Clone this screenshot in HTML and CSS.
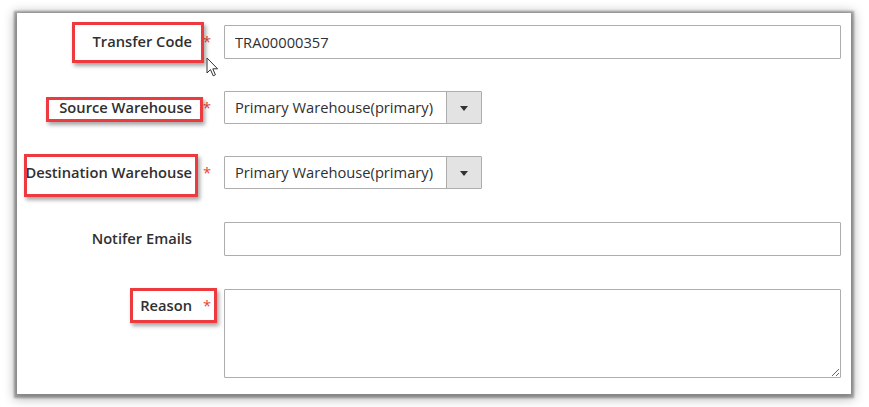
FILE: index.html
```html
<!DOCTYPE html>
<html lang="en">
<head>
<meta charset="utf-8">
<title>Transfer</title>
<link rel="stylesheet" href="styles.css">
</head>
<body>
<div class="page">
  <div class="panel">
    <div class="field">
      <label class="label">Transfer Code<span class="req">*</span></label>
      <div class="control"><input class="input" type="text" value="TRA00000357"></div>
    </div>
    <div class="field">
      <label class="label">Source Warehouse<span class="req">*</span></label>
      <div class="control">
        <div class="select"><span class="select-text">Primary Warehouse(primary)</span><span class="select-btn"><span class="caret"></span></span></div>
      </div>
    </div>
    <div class="field field-gap">
      <label class="label">Destination Warehouse<span class="req">*</span></label>
      <div class="control">
        <div class="select"><span class="select-text">Primary Warehouse(primary)</span><span class="select-btn"><span class="caret"></span></span></div>
      </div>
    </div>
    <div class="field field-gap">
      <label class="label">Notifer Emails<span class="req req-hidden">*</span></label>
      <div class="control"><input class="input" type="text" value=""></div>
    </div>
    <div class="field">
      <label class="label">Reason<span class="req">*</span></label>
      <div class="control"><textarea class="textarea"></textarea></div>
    </div>
  </div>

  <div class="mark mark-transfer"></div>
  <div class="mark mark-source"></div>
  <div class="mark mark-dest"></div>
  <div class="mark mark-reason"></div>

  <svg class="cursor" width="13" height="21" viewBox="0 0 13 21" aria-hidden="true">
    <path d="M1 1 L1 16 L4.5 12.6 L7.2 18.8 L9.4 17.8 L6.8 11.8 L11.6 11.8 Z" fill="#fff" stroke="#333" stroke-width="1" stroke-linejoin="round"/>
  </svg>
</div>
</body>
</html>
```

FILE: styles.css
```css
* { box-sizing: border-box; }

html, body {
  margin: 0;
  padding: 0;
  background: #ffffff;
}

body {
  font-family: "Open Sans", "Liberation Sans", sans-serif;
  font-size: 14.7px;
  color: #303030;
  width: 869px;
  height: 407px;
  overflow: hidden;
}

.page {
  position: relative;
  width: 869px;
  height: 407px;
  padding: 13px 0 0 17px;
}

.panel {
  width: 834px;
  height: 381px;
  background: #ffffff;
  padding-top: 12px;
  box-shadow: 0 1px 2px 3px rgba(0, 0, 0, 0.32), 0 2px 10px 3px rgba(0, 0, 0, 0.28);
}

.field {
  display: grid;
  grid-template-columns: 195px 617px;
  column-gap: 12px;
  margin-bottom: 32px;
}

.field-gap { margin-bottom: 33px; }

.label {
  display: flex;
  justify-content: flex-end;
  align-self: start;
  font-weight: 600;
  line-height: 33px;
  color: #303030;
  padding-right: 1px;
  white-space: nowrap;
}

.req {
  color: #e8452c;
  font-weight: 400;
  margin-left: 11px;
  width: 8px;
}

.req-hidden { visibility: hidden; }

.control { display: flex; }

.input {
  width: 617px;
  height: 34px;
  border: 1px solid #adadad;
  border-radius: 1px;
  padding: 0 10px;
  font-family: "Open Sans", "Liberation Sans", sans-serif;
  font-size: 14.7px;
  color: #303030;
  background: #fff;
  outline: none;
}

.select {
  display: flex;
  width: 258px;
  height: 33px;
  border: 1px solid #adadad;
  border-radius: 1px;
  background: #fff;
}

.select-text {
  flex: 1;
  padding-left: 10px;
  line-height: 31px;
  white-space: nowrap;
}

.select-btn {
  width: 35px;
  background: #e3e3e3;
  border-left: 1px solid #adadad;
  display: flex;
  align-items: center;
  justify-content: center;
}

.caret {
  width: 0;
  height: 0;
  border-left: 4px solid transparent;
  border-right: 4px solid transparent;
  border-top: 5px solid #333;
  margin-top: 1px;
}

.textarea {
  width: 617px;
  height: 89px;
  border: 1px solid #adadad;
  border-radius: 1px;
  background: #fff;
  font-family: "Open Sans", "Liberation Sans", sans-serif;
  font-size: 14.7px;
  resize: both;
  outline: none;
  padding: 6px 10px;
}

.mark {
  position: absolute;
  border: 3px solid #ec3a3f;
  box-shadow: 2px 3px 4px rgba(0, 0, 0, 0.35);
  pointer-events: none;
}

.mark-transfer { left: 72px; top: 22px; width: 132px; height: 41px; }
.mark-source { left: 46px; top: 97px; width: 157px; height: 25px; }
.mark-dest { left: 24px; top: 154px; width: 174px; height: 43px; }
.mark-reason { left: 130px; top: 288px; width: 87px; height: 35px; }

.cursor {
  position: absolute;
  left: 206px;
  top: 57px;
}
```
